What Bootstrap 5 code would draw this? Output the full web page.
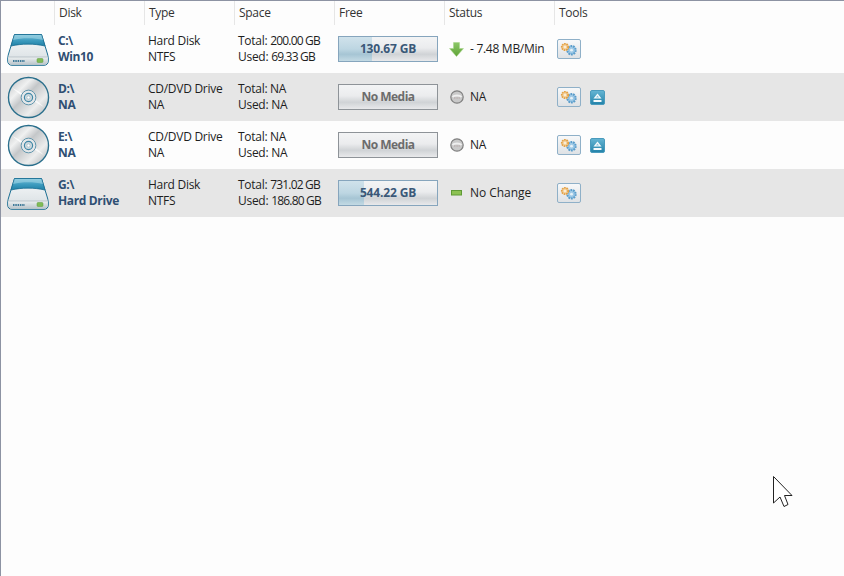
<!DOCTYPE html>
<html lang="en">
<head>
<meta charset="utf-8">
<title>Disk</title>
<link href="https://cdn.jsdelivr.net/npm/bootstrap@5.3.0/dist/css/bootstrap.min.css" rel="stylesheet">
<style>
html,body{height:100%;margin:0;background:#fdfdfd;}
body{font-family:"Open Sans","Noto Sans","Liberation Sans",sans-serif;font-size:12px;color:#1e1e1e;overflow:hidden;letter-spacing:-.28px;}
.dm-frame{position:relative;height:576px;width:844px;border-top:1px solid #8d93a3;border-left:1px solid #8d93a3;background:#fdfdfd;}
.dm-grid{display:grid;grid-template-columns:53px 90px 90px 100px 110px 110px 1fr;}
.dm-head{height:24px;line-height:24px;color:#333;}
.dm-head>div{padding-left:4px;border-left:1px solid #e6e6e6;}
.dm-head>div:first-child{border-left:0;}
.dm-row{height:48px;align-items:center;}
.dm-alt{background:#e6e6e6;}
.dm-two{line-height:16px;padding-left:4px;}
.dm-num{letter-spacing:-.8px;}
.dm-wide{letter-spacing:-.05px;}
.dm-type{padding-left:4px;line-height:16px;}
.dm-disk{padding-left:4px;line-height:16px;color:#2f4f73;font-weight:700;letter-spacing:-.35px;}
.dm-ico{padding-left:6px;display:flex;align-items:center;}
.dm-bar{position:relative;width:100px;height:26px;margin-left:4px;border:1px solid #86a5bd;background:linear-gradient(#f3f4f5,#ebecee 45%,#d0d3d6 72%,#e8e9eb);text-align:center;line-height:24px;font-weight:700;color:#3a5878;overflow:hidden;letter-spacing:-.15px;}
.dm-bar>i{position:absolute;left:0;top:0;bottom:0;background:linear-gradient(#d0e2eb,#bdd6e2 50%,#a6c5d4 72%,#c3dae4);}
.dm-bar>span{position:relative;}
.dm-bar.dm-none{border-color:#8e9398;color:#6c6c6c;letter-spacing:-.5px;}
.dm-status{padding-left:5px;display:flex;align-items:center;gap:6px;}
.dm-sico{width:15px;display:flex;justify-content:center;}
.dm-tools{padding-left:3px;display:flex;align-items:center;gap:9px;}
.dm-tool{width:24px;height:20px;border:1px solid #8fb0c8;border-radius:2px;background:linear-gradient(#f7f8f9,#dfe2e5);display:flex;align-items:center;justify-content:center;padding:0;}
.dm-cursor{position:absolute;left:772px;top:475px;}
</style>
</head>
<body>
<svg width="0" height="0" class="d-block" style="position:absolute">
<defs>
<linearGradient id="gTop" x1="0" y1="0" x2="0" y2="1"><stop offset="0" stop-color="#7cc0d8"/><stop offset=".5" stop-color="#3f9dc0"/><stop offset="1" stop-color="#1f80a6"/></linearGradient>
<linearGradient id="gBody" x1="0" y1="0" x2="0" y2="1"><stop offset="0" stop-color="#f7f9fa"/><stop offset="1" stop-color="#d6dde1"/></linearGradient>
<linearGradient id="gFront" x1="0" y1="0" x2="0" y2="1"><stop offset="0" stop-color="#eef1f2"/><stop offset="1" stop-color="#b8c3c9"/></linearGradient>
<linearGradient id="gDisc" x1="0" y1="0" x2="1" y2="1"><stop offset="0" stop-color="#b9bcbe"/><stop offset=".3" stop-color="#f0f1f1"/><stop offset=".45" stop-color="#c4c7c9"/><stop offset=".7" stop-color="#eceded"/><stop offset="1" stop-color="#a9adb0"/></linearGradient>
<linearGradient id="gBtn" x1="0" y1="0" x2="0" y2="1"><stop offset="0" stop-color="#66b6d4"/><stop offset="1" stop-color="#2282a9"/></linearGradient>
<linearGradient id="gArrow" x1="0" y1="0" x2="0" y2="1"><stop offset="0" stop-color="#8cc768"/><stop offset="1" stop-color="#5fa336"/></linearGradient>
<symbol id="hdd" viewBox="0 0 42 33">
<path d="M7.5 1.5H34.5L40.5 21C41 23 41.3 24 41.3 25V28C41.3 30.8 39.5 32.3 37 32.3H5C2.5 32.3.7 30.8.7 28V25C.7 24 1 23 1.5 21Z" fill="url(#gBody)" stroke="#1c6f93"/>
<path d="M7.5 1.5H34.5L38 13C27 10.5 15 10.5 4 13Z" fill="url(#gTop)" stroke="#1c6f93" stroke-width=".8"/>
<path d="M6 7C15 4.5 27 4.5 36 7L34.3 2H7.7Z" fill="#a6d9e8" opacity=".55"/>
<path d="M1.2 24H40.8V28C40.8 30.6 39.3 31.8 37 31.8H5C2.7 31.8 1.2 30.6 1.2 28Z" fill="url(#gFront)"/>
<path d="M1.2 24H40.8" stroke="#a9b6bd" stroke-width=".7"/>
<path d="M6 28H18" stroke="#3f7a99" stroke-width="2" stroke-dasharray="1.5 .8"/>
<rect x="30" y="25.5" width="6" height="4" rx="1" fill="#7fbb55" stroke="#5d9a3c" stroke-width=".5"/>
</symbol>
<symbol id="disc" viewBox="0 0 44 44">
<circle cx="22" cy="22" r="20.5" fill="url(#gDisc)" stroke="#2a6f8c" stroke-width="1.4"/>
<path d="M5 12L18 19L16 21Z" fill="#fff" opacity=".8"/><path d="M38 32L26 25L28 23Z" fill="#fff" opacity=".7"/>
<circle cx="22" cy="22" r="7.5" fill="#e4e7e9" stroke="#5d93ab" stroke-width="1"/>
<circle cx="22" cy="22" r="4.2" fill="#cfd9de" stroke="#3f87a6" stroke-width="1.2"/>
<circle cx="22" cy="22" r="1.6" fill="#fff" stroke="#8aa9b8" stroke-width=".5"/>
</symbol>
<symbol id="gears" viewBox="0 0 18 14">
<circle cx="11.5" cy="8.2" r="4.2" fill="#9cc8e6" stroke="#5b9dcb" stroke-width="2" stroke-dasharray="1.8 .8"/>
<circle cx="11.5" cy="8.2" r="1.4" fill="#e8f2f8"/>
<circle cx="5" cy="5" r="3.2" fill="#f4d3a0" stroke="#e3a045" stroke-width="1.8" stroke-dasharray="1.6 .7"/>
<circle cx="5" cy="5" r="1.1" fill="#fbf3e4"/>
</symbol>
<symbol id="eject" viewBox="0 0 15 15">
<rect x=".5" y=".5" width="14" height="14" rx="1.5" fill="url(#gBtn)" stroke="#4a9bbd"/>
<path d="M7.5 3.5L11.5 8.5H3.5Z" fill="#f4fafc"/><path d="M7.5 5.5L9 7.5H6Z" fill="#8cc6dc"/><rect x="3.5" y="10" width="8" height="2" fill="#f4fafc"/>
</symbol>
<symbol id="none" viewBox="0 0 14 14">
<circle cx="7" cy="7" r="6.2" fill="#c9c9c9" stroke="#808080" stroke-width="1.2"/>
<path d="M2.5 7C4 5 10 5 11.5 7" stroke="#efefef" stroke-width="2" fill="none"/>
<path d="M4 8H10" stroke="#b5a5a5" stroke-width="1" stroke-dasharray="1 .6"/>
</symbol>
</defs>
</svg>
<div class="dm-frame">
  <div class="dm-grid dm-head">
    <div></div><div>Disk</div><div>Type</div><div>Space</div><div>Free</div><div>Status</div><div>Tools</div>
  </div>

  <div class="dm-grid dm-row">
    <div class="dm-ico"><svg width="42" height="33"><use href="#hdd"/></svg></div>
    <div class="dm-disk">C:\<br>Win10</div>
    <div class="dm-type">Hard Disk<br>NTFS</div>
    <div class="dm-two">Total: <span class="dm-num">200.00 GB</span><br>Used: <span class="dm-num">69.33 GB</span></div>
    <div><div class="dm-bar"><i style="width:34%"></i><span>130.67 GB</span></div></div>
    <div class="dm-status"><span class="dm-sico"><svg width="15" height="15" viewBox="0 0 15 15"><path d="M4.5 .5H10.5V6.5H14.5L7.5 14.5L.5 6.5H4.5Z" fill="url(#gArrow)" stroke="#a5d586" stroke-width=".5"/></svg></span><span>- 7.48 MB/Min</span></div>
    <div class="dm-tools"><button type="button" class="dm-tool"><svg width="18" height="14"><use href="#gears"/></svg></button></div>
  </div>

  <div class="dm-grid dm-row dm-alt">
    <div class="dm-ico"><svg width="43" height="43"><use href="#disc"/></svg></div>
    <div class="dm-disk">D:\<br>NA</div>
    <div class="dm-type">CD/DVD Drive<br>NA</div>
    <div class="dm-two">Total: NA<br>Used: NA</div>
    <div><div class="dm-bar dm-none"><span>No Media</span></div></div>
    <div class="dm-status"><span class="dm-sico"><svg width="14" height="14"><use href="#none"/></svg></span><span>NA</span></div>
    <div class="dm-tools"><button type="button" class="dm-tool"><svg width="18" height="14"><use href="#gears"/></svg></button><svg width="15" height="15"><use href="#eject"/></svg></div>
  </div>

  <div class="dm-grid dm-row">
    <div class="dm-ico"><svg width="43" height="43"><use href="#disc"/></svg></div>
    <div class="dm-disk">E:\<br>NA</div>
    <div class="dm-type">CD/DVD Drive<br>NA</div>
    <div class="dm-two">Total: NA<br>Used: NA</div>
    <div><div class="dm-bar dm-none"><span>No Media</span></div></div>
    <div class="dm-status"><span class="dm-sico"><svg width="14" height="14"><use href="#none"/></svg></span><span>NA</span></div>
    <div class="dm-tools"><button type="button" class="dm-tool"><svg width="18" height="14"><use href="#gears"/></svg></button><svg width="15" height="15"><use href="#eject"/></svg></div>
  </div>

  <div class="dm-grid dm-row dm-alt">
    <div class="dm-ico"><svg width="42" height="33"><use href="#hdd"/></svg></div>
    <div class="dm-disk">G:\<br>Hard Drive</div>
    <div class="dm-type">Hard Disk<br>NTFS</div>
    <div class="dm-two">Total: <span class="dm-num">731.02 GB</span><br>Used: <span class="dm-num">186.80 GB</span></div>
    <div><div class="dm-bar"><i style="width:26%"></i><span>544.22 GB</span></div></div>
    <div class="dm-status"><span class="dm-sico"><svg width="12" height="6" viewBox="0 0 12 6"><rect x=".5" y=".5" width="10" height="4.5" fill="#8cc152" stroke="#5f9a35"/></svg></span><span class="dm-wide">No Change</span></div>
    <div class="dm-tools"><button type="button" class="dm-tool"><svg width="18" height="14"><use href="#gears"/></svg></button></div>
  </div>

  <svg class="dm-cursor" width="20" height="32" viewBox="0 0 20 32"><path d="M.5 .5V27L7 21L11 30.5L15 28.5L11.5 19.5H19Z" fill="#fff" stroke="#222" stroke-width="1"/></svg>
</div>
<script src="https://cdn.jsdelivr.net/npm/bootstrap@5.3.0/dist/js/bootstrap.bundle.min.js"></script>
</body>
</html>
